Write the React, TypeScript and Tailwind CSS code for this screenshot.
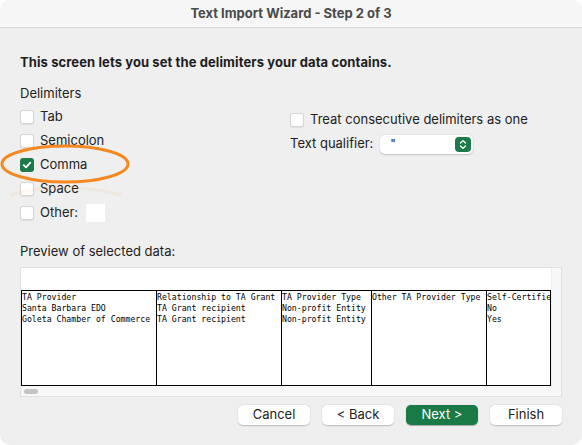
import React from "react";

const sans = { fontFamily: "Inter, 'Liberation Sans', sans-serif" };

function Box({ checked = false }: { checked?: boolean }) {
  if (checked) {
    return (
      <div className="w-[14px] h-[14px] rounded-[3px] bg-[#1f7a4a] flex items-center justify-center shrink-0">
        <svg width="10" height="10" viewBox="0 0 10 10">
          <path d="M1.8 5.2 L4 7.4 L8.3 2.6" fill="none" stroke="white" strokeWidth="1.8" strokeLinecap="round" strokeLinejoin="round" />
        </svg>
      </div>
    );
  }
  return <div className="w-[14px] h-[14px] rounded-[3px] bg-white border border-[#d6d6d6] shadow-[0_0.5px_1px_rgba(0,0,0,0.08)] shrink-0" />;
}

function Row({ label, checked, children }: { label: string; checked?: boolean; children?: React.ReactNode }) {
  return (
    <div className="h-[24px] flex items-center gap-[6px]">
      <Box checked={checked} />
      <span className="text-[13px] text-[#222]">{label}</span>
      {children}
    </div>
  );
}

const cols = [
  { w: 135, lines: ["TA Provider", "Santa Barbara EDO", "Goleta Chamber of Commerce"] },
  { w: 125, lines: ["Relationship to TA Grant", "TA Grant recipient", "TA Grant recipient"] },
  { w: 90, lines: ["TA Provider Type", "Non-profit Entity", "Non-profit Entity"] },
  { w: 115, lines: ["Other TA Provider Type"] },
  { w: 63, lines: ["Self-Certified", "No", "Yes"] },
];

export default function App() {
  return (
    <div className="w-[582px] h-[445px] bg-white" style={sans}>
      <div className="relative w-full h-full rounded-[10px] overflow-hidden bg-[#efefef] flex flex-col">
        <div className="h-[28px] bg-[#f6f6f6] border-b border-[#dadada] flex items-center justify-center shrink-0">
          <span className="text-[13px] font-bold text-[#4a4a4a]">Text Import Wizard - Step 2 of 3</span>
        </div>
        <div className="px-[20px] flex flex-col">
          <div className="mt-[26px] text-[13px] font-bold text-[#1d1d1d] leading-[16px] tracking-[0.1px]">
            This screen lets you set the delimiters your data contains.
          </div>
          <div className="mt-[15px] text-[13px] text-[#222] leading-[16px]">Delimiters</div>
          <div className="flex mt-[4px]">
            <div className="w-[270px] flex flex-col">
              <Row label="Tab" />
              <Row label="Semicolon" />
              <Row label="Comma" checked />
              <Row label="Space" />
              <Row label="Other:">
                <div className="ml-[2px] w-[19px] h-[18px] bg-white" />
              </Row>
            </div>
            <div className="flex flex-col">
              <div className="h-[24px] mt-[3px] flex items-center gap-[6px]">
                <Box />
                <span className="text-[13px] text-[#222]">Treat consecutive delimiters as one</span>
              </div>
              <div className="h-[24px] flex items-center gap-[7px]">
                <span className="text-[13px] text-[#222]">Text qualifier:</span>
                <div className="w-[93px] h-[19px] bg-white rounded-[5px] shadow-[0_0.5px_1.5px_rgba(0,0,0,0.2)] flex items-center justify-between pl-[10px] pr-[2px]">
                  <span className="text-[12px] text-[#222]">"</span>
                  <div className="w-[16px] h-[15px] rounded-[4px] bg-[#1f7a4a] flex items-center justify-center">
                    <svg width="8" height="11" viewBox="0 0 8 11">
                      <path d="M1.5 4 L4 1.6 L6.5 4 M1.5 7 L4 9.4 L6.5 7" fill="none" stroke="white" strokeWidth="1.3" strokeLinecap="round" strokeLinejoin="round" />
                    </svg>
                  </div>
                </div>
              </div>
            </div>
          </div>
          <div className="mt-[18px] text-[13px] text-[#222] leading-[16px]">Preview of selected data:</div>
          <div className="mt-[8px] h-[130px] border border-[#e0e0e0] bg-white flex flex-col">
            <div className="flex flex-1">
              <div className="flex flex-col">
                <div className="h-[22px]" />
                <div
                  className="flex border border-black h-[96px]"
                  style={{ fontFamily: "'DejaVu Sans Mono', 'Liberation Mono', monospace" }}
                >
                  {cols.map((c, i) => (
                    <div
                      key={i}
                      className={`overflow-hidden whitespace-nowrap pt-[1px] text-[8.2px] leading-[11px] text-black ${i < cols.length - 1 ? "border-r border-black" : ""}`}
                      style={{ width: c.w }}
                    >
                      {c.lines.map((l, j) => (
                        <div key={j}>{l}</div>
                      ))}
                    </div>
                  ))}
                </div>
              </div>
              <div className="flex-1 bg-[#f7f7f7] border-l border-[#ececec]" />
            </div>
            <div className="h-[11px] bg-[#f7f7f7] flex items-center pl-[3px]">
              <div className="w-[14px] h-[5px] rounded-full bg-[#c4c4c4]" />
            </div>
          </div>
          <div className="mt-[8px] flex justify-end gap-[12px]">
            {["Cancel", "< Back", "Next >", "Finish"].map((b) => (
              <div
                key={b}
                className={`w-[72px] h-[20px] rounded-[5px] flex items-center justify-center text-[13px] ${
                  b === "Next >"
                    ? "bg-[#1a7a45] text-white shadow-[0_0.5px_1px_rgba(0,0,0,0.3)]"
                    : "bg-white text-[#222] shadow-[0_0.5px_1.5px_rgba(0,0,0,0.22)]"
                }`}
              >
                {b}
              </div>
            ))}
          </div>
        </div>
        <svg className="absolute left-0 top-0 pointer-events-none" width="582" height="445">
          <path d="M10 195 Q65 180 122 195" fill="none" stroke="#f5891f" strokeOpacity="0.07" strokeWidth="3" />
          <ellipse cx="65" cy="164" rx="63" ry="18" fill="none" stroke="#f5891f" strokeWidth="3" />
        </svg>
      </div>
    </div>
  );
}
